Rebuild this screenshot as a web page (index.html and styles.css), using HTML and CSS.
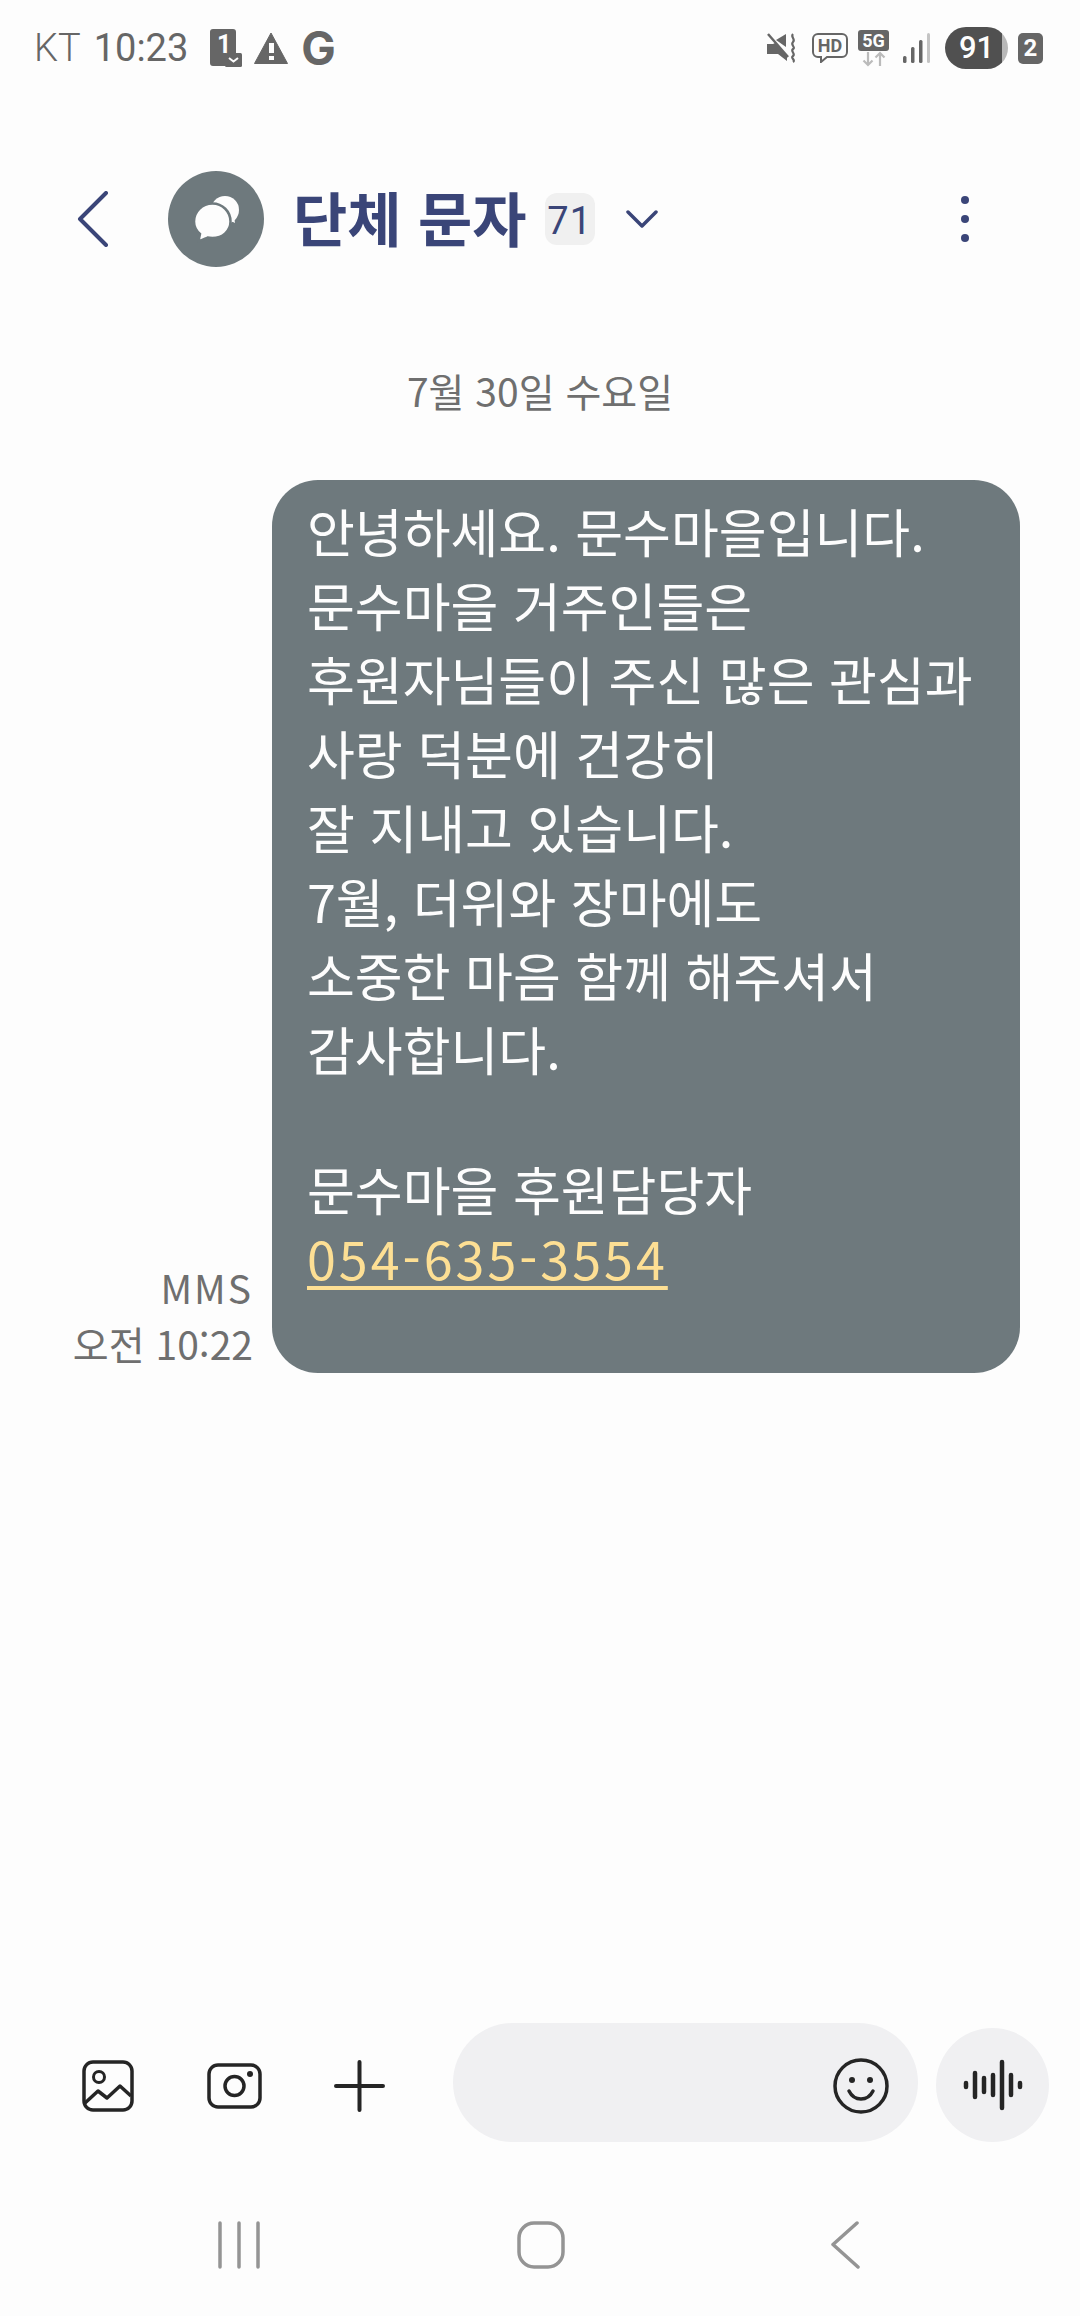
FILE: index.html
```html
<!DOCTYPE html>
<html lang="ko">
<head>
    <meta charset="UTF-8">
    <meta name="viewport" content="width=device-width, initial-scale=1.0">
    <title>단체 문자</title>
    <link rel="stylesheet" href="styles.css">
</head>
<body>
    <div class="phone">
        <div class="status-bar">
            <div class="status-left">
                <span class="status-carrier">KT</span>
                <span class="status-time">10:23</span>
                <svg class="sim-icon" width="32" height="38" viewBox="0 0 32 38">
                    <path d="M3 0h20a3 3 0 0 1 3 3v21h-10v13H3a3 3 0 0 1-3-3V3a3 3 0 0 1 3-3z" fill="#666"/>
                    <text x="7" y="23.500" class="sim-number">1</text>
                    <rect x="15" y="24" width="17" height="14" rx="1.500" fill="#666"/>
                    <path d="M19 29l4.500 3.500 4.500-3.500" fill="none" stroke="#fdfdfd" stroke-width="2"/>
                </svg>
                <svg class="warn-icon" width="34" height="32" viewBox="0 0 34 32">
                    <path d="M17 1L33.500 31.500H.5z" fill="#666" stroke="#666" stroke-linejoin="round"/>
                    <rect x="15" y="11" width="5" height="10" fill="#fdfdfd"/>
                    <rect x="15" y="24" width="5" height="4" fill="#fdfdfd"/>
                </svg>
                <span class="status-g">G</span>
            </div>
            <div class="status-right">
                <svg class="mute-icon" width="30" height="30" viewBox="0 0 30 30">
                    <path d="M0 11h6l2-1 12 12v6l-9-7H0z" fill="#666"/>
                    <path d="M9 7l10-6v13z" fill="#666"/>
                    <path d="M1 1l20 23" stroke="#666" stroke-width="2.500"/>
                    <path d="M26 1c-3 3 3 5 0 8s3 5 0 7 3 5 0 7 3 4 0 6" fill="none" stroke="#666" stroke-width="2.200"/>
                </svg>
                <svg class="hd-icon" width="36" height="30" viewBox="0 0 36 30">
                    <path d="M6 1h24a5 5 0 0 1 5 5v13a5 5 0 0 1-5 5H15l-6 5v-5H6a5 5 0 0 1-5-5V6a5 5 0 0 1 5-5z" fill="none" stroke="#666" stroke-width="2"/>
                    <text x="18" y="19" class="hd-text">HD</text>
                </svg>
                <div class="fiveg-icon">
                    <span class="fiveg-box">5G</span>
                    <svg width="24" height="16" viewBox="0 0 24 16">
                        <path d="M6 1v13M1.500 9.500L6 14l4.500-4.500" fill="none" stroke="#bbb" stroke-width="2.200"/>
                        <path d="M18 15V2M13.500 6.500L18 2l4.500 4.500" fill="none" stroke="#bbb" stroke-width="2.200"/>
                    </svg>
                </div>
                <svg class="signal-icon" width="27" height="30" viewBox="0 0 27 30">
                    <rect x="0" y="23" width="3.500" height="7" rx="1.500" fill="#666"/>
                    <rect x="8" y="14" width="3.500" height="16" rx="1.500" fill="#666"/>
                    <rect x="16" y="7" width="3.500" height="23" rx="1.500" fill="#666"/>
                    <rect x="24" y="0" width="3" height="30" rx="1.500" fill="#c4c4c4"/>
                </svg>
                <div class="battery">
                    <span class="battery-level">91</span>
                </div>
                <span class="sim-badge">2</span>
            </div>
        </div>

        <div class="app-bar">
            <svg class="back-button" width="32" height="56" viewBox="0 0 32 56">
                <path d="M29 2L3 28l26 26" fill="none" stroke="#3a4578" stroke-width="4" stroke-linecap="round" stroke-linejoin="round"/>
            </svg>
            <div class="avatar">
                <svg width="56" height="56" viewBox="0 0 56 56">
                    <circle cx="37" cy="19" r="14" fill="#fdfdfd"/>
                    <path d="M46 26l1 6-6-3z" fill="#fdfdfd"/>
                    <path d="M24.500 12.500c-10.500 0-18.500 8-18.500 18 0 5 2 9 6 12.500l-1.500 7c3 0 6-2 9-3.500 1.500.5 3 .5 5 .5 10 0 18-7 18-16.500 0-10-8-18-18-18z" fill="#fdfdfd" stroke="#6e797d" stroke-width="2.500"/>
                </svg>
            </div>
            <h1 class="thread-title">단체 문자</h1>
            <span class="member-count">71</span>
            <svg class="expand-icon" width="32" height="20" viewBox="0 0 32 20">
                <path d="M2 3l14 14L30 3" fill="none" stroke="#3a4578" stroke-width="3.500" stroke-linecap="round" stroke-linejoin="round"/>
            </svg>
            <div class="more-button">
                <span class="more-dot"></span>
                <span class="more-dot"></span>
                <span class="more-dot"></span>
            </div>
        </div>

        <div class="thread">
            <div class="thread-date">7월 30일 수요일</div>
            <div class="message-row">
                <div class="message-meta">
                    <div class="message-type">MMS</div>
                    <div>오전 10:22</div>
                </div>
                <div class="message-bubble">
                    <p class="message-text">
                        안녕하세요. 문수마을입니다.<br>
                        문수마을 거주인들은<br>
                        후원자님들이 주신 많은 관심과<br>
                        사랑 덕분에 건강히<br>
                        잘 지내고 있습니다.<br>
                        7월, 더위와 장마에도<br>
                        소중한 마음 함께 해주셔서<br>
                        감사합니다.
                    </p>
                    <p class="message-text message-signature">문수마을 후원담당자</p>
                    <a class="message-link">054-635-3554</a>
                </div>
            </div>
        </div>

        <div class="composer">
            <svg class="composer-icon icon-gallery" width="52" height="52" viewBox="0 0 52 52">
                <rect x="2" y="2" width="48" height="48" rx="9" fill="none" stroke="#252525" stroke-width="3.500"/>
                <circle cx="17" cy="17" r="5.500" fill="none" stroke="#252525" stroke-width="3"/>
                <path d="M3 43l13-12 9 7 13-12 11 10" fill="none" stroke="#252525" stroke-width="3.500" stroke-linejoin="round"/>
            </svg>
            <svg class="composer-icon icon-camera" width="55" height="46" viewBox="0 0 55 46">
                <rect x="2" y="2" width="51" height="42" rx="9" fill="none" stroke="#252525" stroke-width="3.500"/>
                <circle cx="27.500" cy="23" r="9.500" fill="none" stroke="#252525" stroke-width="3.500"/>
                <circle cx="43" cy="11" r="3" fill="#252525"/>
            </svg>
            <svg class="composer-icon icon-plus" width="51" height="52" viewBox="0 0 51 52">
                <path d="M25.500 2v48M2 26h47" fill="none" stroke="#252525" stroke-width="4" stroke-linecap="round"/>
            </svg>
            <div class="message-input">
                <svg width="56" height="56" viewBox="0 0 56 56">
                    <circle cx="28" cy="28" r="26" fill="none" stroke="#252525" stroke-width="3.500"/>
                    <circle cx="19" cy="22" r="3" fill="#252525"/>
                    <circle cx="37" cy="22" r="3" fill="#252525"/>
                    <path d="M16 33c3 6 8 8 12 8s9-2 12-8" fill="none" stroke="#252525" stroke-width="3.500" stroke-linecap="round"/>
                </svg>
            </div>
            <div class="voice-button">
                <svg width="60" height="52" viewBox="0 0 60 52">
                    <path d="M3 24v4M12 14v24M21 19v14M30 16v20M39 3v46M48 16v20M57 24v4" fill="none" stroke="#252525" stroke-width="4.500" stroke-linecap="round"/>
                </svg>
            </div>
        </div>

        <div class="nav-bar">
            <svg class="nav-recents" width="42" height="48" viewBox="0 0 42 48">
                <path d="M2 2v44M21 2v44M40 2v44" fill="none" stroke="#949494" stroke-width="3.500" stroke-linecap="round"/>
            </svg>
            <svg class="nav-home" width="48" height="48" viewBox="0 0 48 48">
                <rect x="2" y="2" width="44" height="44" rx="15" fill="none" stroke="#949494" stroke-width="3.500"/>
            </svg>
            <svg class="nav-back" width="30" height="48" viewBox="0 0 30 48">
                <path d="M27 2L3 23.500 28 46" fill="none" stroke="#949494" stroke-width="3.500" stroke-linecap="round" stroke-linejoin="round"/>
            </svg>
        </div>
    </div>
</body>
</html>
```

FILE: styles.css
```css
* {
    box-sizing: border-box;
}
body {
    margin: 0;
    padding: 0;
    background-color: #fdfdfd;
    font-family: "Noto Sans CJK KR", "Noto Sans", sans-serif;
}
.phone {
    display: flex;
    flex-direction: column;
    height: 100vh;
    overflow: hidden;
}

/* status bar */
.status-bar {
    display: flex;
    justify-content: space-between;
    align-items: center;
    height: 96px;
    padding: 0 37px 0 34px;
    color: #666;
}
.status-left,
.status-right {
    display: flex;
    align-items: center;
}
.status-carrier {
    font-family: Roboto, sans-serif;
    font-size: 38px;
    font-weight: 300;
}
.status-time {
    font-family: Roboto, sans-serif;
    font-size: 38px;
    margin-left: 13px;
}
.sim-icon {
    margin-left: 22px;
    overflow: visible;
}
.sim-number {
    font-family: Roboto, sans-serif;
    font-size: 25px;
    font-weight: 700;
    fill: #fdfdfd;
}
.warn-icon {
    margin-left: 12px;
}
.status-g {
    font-family: Inter, sans-serif;
    font-size: 46px;
    font-weight: 700;
    line-height: 40px;
    margin-left: 13px;
}
.hd-icon {
    margin-left: 15px;
}
.hd-text {
    font-family: Roboto, sans-serif;
    font-size: 18px;
    font-weight: 700;
    text-anchor: middle;
    fill: #666;
}
.fiveg-icon {
    display: flex;
    flex-direction: column;
    align-items: center;
    margin-left: 10px;
}
.fiveg-box {
    width: 31px;
    height: 21px;
    border-radius: 3px;
    background-color: #666;
    color: #fdfdfd;
    font-family: Roboto, sans-serif;
    font-size: 18px;
    font-weight: 700;
    line-height: 21px;
    text-align: center;
}
.signal-icon {
    margin-left: 14px;
}
.battery {
    width: 63px;
    height: 42px;
    margin-left: 15px;
    border-radius: 21px;
    background: linear-gradient(to right, #505050 90%, #b8b8b8 90%);
    color: #fdfdfd;
    text-align: center;
}
.battery-level {
    font-family: Roboto, sans-serif;
    font-size: 31px;
    font-weight: 500;
    line-height: 42px;
}
.sim-badge {
    width: 25px;
    height: 31px;
    margin-left: 10px;
    border-radius: 5px;
    background-color: #666;
    color: #fdfdfd;
    font-family: Roboto, sans-serif;
    font-size: 24px;
    font-weight: 700;
    line-height: 31px;
    text-align: center;
}

/* header */
.app-bar {
    display: flex;
    align-items: center;
    height: 96px;
    margin-top: 75px;
    padding-left: 77px;
}
.avatar {
    display: flex;
    justify-content: center;
    align-items: center;
    width: 96px;
    height: 96px;
    margin-left: 59px;
    border-radius: 50%;
    background-color: #6e797d;
}
.thread-title {
    margin: 0 0 4px 29px;
    color: #3a4578;
    font-size: 59px;
    font-weight: 700;
    line-height: 76px;
    white-space: nowrap;
}
.member-count {
    width: 50px;
    height: 52px;
    margin-left: 18px;
    border-radius: 12px;
    background-color: #f0f0f0;
    color: #3a4578;
    font-family: Roboto, sans-serif;
    font-size: 38px;
    letter-spacing: 1px;
    line-height: 56px;
    text-align: center;
}
.expand-icon {
    margin-left: 31px;
}
.more-button {
    display: flex;
    flex-direction: column;
    gap: 11px;
    margin-left: 303px;
}
.more-dot {
    width: 8px;
    height: 8px;
    border-radius: 50%;
    background-color: #3a4578;
}

/* messages */
.thread {
    flex: 1;
    padding-top: 98px;
}
.thread-date {
    color: #6f6f6f;
    font-size: 39px;
    line-height: 50px;
    text-align: center;
}
.message-row {
    display: flex;
    justify-content: flex-end;
    align-items: flex-end;
    gap: 19px;
    margin-top: 65px;
    padding-right: 60px;
}
.message-meta {
    padding-bottom: 2px;
    color: #6f6f6f;
    font-size: 39px;
    line-height: 56px;
    text-align: right;
}
.message-type {
    letter-spacing: 2px;
}
.message-bubble {
    width: 748px;
    height: 893px;
    padding: 14px 20px 0 35px;
    border-radius: 46px;
    background-color: #6e797d;
    color: #fdfdfd;
    font-size: 52px;
    line-height: 74px;
    white-space: nowrap;
}
.message-text {
    margin: 0;
}
.message-signature {
    margin-top: 66px;
}
.message-link {
    display: block;
    margin-top: -5px;
    color: #fddf94;
    letter-spacing: 3px;
    text-decoration: underline;
    text-decoration-thickness: 4px;
    text-decoration-skip-ink: none;
    text-underline-offset: 6px;
}

/* bottom input */
.composer {
    display: flex;
    align-items: flex-end;
    height: 119px;
    padding-left: 82px;
}
.composer-icon {
    align-self: center;
    margin-top: 6px;
}
.icon-camera {
    margin-left: 73px;
}
.icon-plus {
    margin-left: 72px;
}
.message-input {
    display: flex;
    justify-content: flex-end;
    align-items: center;
    width: 465px;
    height: 119px;
    margin-left: 68px;
    padding: 6px 29px 0 0;
    border-radius: 60px;
    background-color: #f0f0f2;
}
.voice-button {
    display: flex;
    justify-content: center;
    align-items: center;
    width: 113px;
    height: 114px;
    margin-left: 18px;
    border-radius: 50%;
    background-color: #f0f0f2;
}

/* navigation */
.nav-bar {
    display: flex;
    align-items: center;
    height: 174px;
    padding: 32px 0 0 218px;
}
.nav-home {
    margin-left: 257px;
}
.nav-back {
    margin-left: 265px;
}
```
